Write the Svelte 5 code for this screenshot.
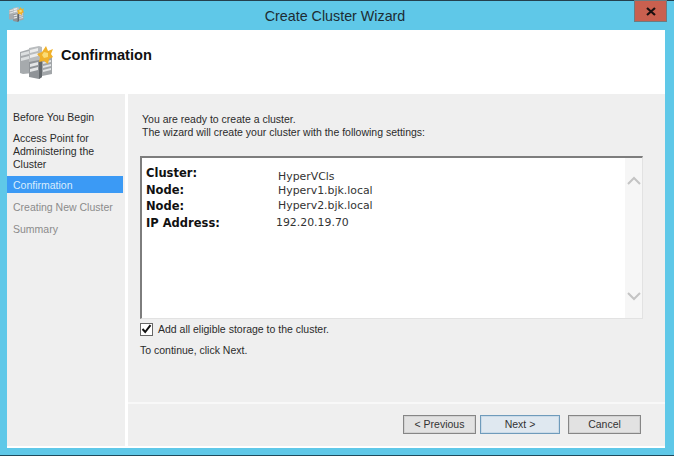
<script>
  const steps = [
    { label: 'Before You Begin', state: '' },
    { label: 'Access Point for Administering the Cluster', state: 'multi' },
    { label: 'Confirmation', state: 'active' },
    { label: 'Creating New Cluster', state: 'off' },
    { label: 'Summary', state: 'off' }
  ];

  const settings = [
    { name: 'Cluster:', value: 'HyperVCls' },
    { name: 'Node:', value: 'Hyperv1.bjk.local' },
    { name: 'Node:', value: 'Hyperv2.bjk.local' },
    { name: 'IP Address:', value: '192.20.19.70' }
  ];

  let addStorage = true;
</script>

{#snippet clusterIcon(size)}
  <svg width={size} height={size} viewBox="0 0 33 33" aria-hidden="true">
    <!-- back left -->
    <path d="M0 6 L10 3 L13 4 V27 L3 28 L0 27 Z" fill="#a6aaad" />
    <path d="M1 7 L9 5 V8 L1 10 Z M1 12 L9 10 V13 L1 15 Z" fill="#dcdfe0" />
    <path d="M9 4 L13 4 V27 H9 Z" fill="#8a8e91" />
    <!-- back middle -->
    <path d="M9 2 L19 0 L22 1 V20 H9 Z" fill="#b9bcbe" />
    <path d="M10 4 L18 2 V5 L10 7 Z M10 9 L18 7 V10 L10 12 Z" fill="#eceded" />
    <!-- right -->
    <path d="M20 12 L32 10 V28 L22 30 L20 29 Z" fill="#a2a6a9" />
    <path d="M23 16 L31 14 V16 L23 18 Z M23 20 L31 18 V20 L23 22 Z M23 24 L31 22 V24 L23 26 Z" fill="#e2e4e5" />
    <!-- front -->
    <path d="M9 16 L19 14 L22 15 V31 L19 33 L9 31 Z" fill="#8f9397" />
    <path d="M10 18 L18 16 V19 L10 21 Z M10 23 L18 21 V24 L10 26 Z" fill="#e4e6e7" />
    <path d="M19 15 L22 15 V31 L19 33 Z" fill="#63686c" />
    <!-- star -->
    <path d="M26 0 L28 5 L33 3 L31 8 L33 11 L29 13 L28 18 L24 15 L19 16 L20 11 L17 8 L22 6 Z" fill="#f0b12a" />
    <path d="M24 6 L28 7 L28 11 L24 12 L22 9 Z" fill="#fbdc74" />
  </svg>
{/snippet}

<div class="window">
  <header class="titlebar">
    <span class="app-icon">{@render clusterIcon(15)}</span>
    <h1>Create Cluster Wizard</h1>
    <button class="close" aria-label="Close">
      <svg width="10" height="9" viewBox="0 0 10 9"><path d="M1 1 L9 8 M9 1 L1 8" stroke="#1a1010" stroke-width="2.2" /></svg>
    </button>
  </header>

  <div class="body">
    <div class="banner">
      {@render clusterIcon(33)}
      <h2>Confirmation</h2>
    </div>

    <div class="columns">
      <nav class="steps">
        {#each steps as step}
          <div class="step {step.state}">{step.label}</div>
        {/each}
      </nav>

      <main class="page">
        <div class="content">
          <p class="intro">You are ready to create a cluster.<br />The wizard will create your cluster with the following settings:</p>

          <div class="summary">
            <div class="rows">
              {#each settings as row, i}
                <div class="row r{i}">
                  <span class="name">{row.name}</span>
                  <span class="value">{row.value}</span>
                </div>
              {/each}
            </div>
            <div class="scroll">
              <svg width="14" height="9" viewBox="0 0 14 9"><path d="M1 8 L7 2 L13 8" fill="none" stroke="#c4c4c4" stroke-width="2" /></svg>
              <svg width="14" height="9" viewBox="0 0 14 9"><path d="M1 1 L7 7 L13 1" fill="none" stroke="#c4c4c4" stroke-width="2" /></svg>
            </div>
          </div>

          <label class="check">
            <input type="checkbox" bind:checked={addStorage} />
            <span class="box">
              {#if addStorage}
                <svg width="11" height="10" viewBox="0 0 11 10"><path d="M1.5 5 L4.2 8 L9.5 1.2" fill="none" stroke="#111" stroke-width="2" /></svg>
              {/if}
            </span>
            Add all eligible storage to the cluster.
          </label>
          <p class="hint">To continue, click Next.</p>
        </div>

        <footer class="actions">
          <button class="btn">&lt; Previous</button>
          <button class="btn primary">Next &gt;</button>
          <button class="btn cancel">Cancel</button>
        </footer>
      </main>
    </div>
  </div>
</div>

<style>
  :global(body) {
    margin: 0;
    background: #5fc8e8;
  }

  .window {
    width: 674px;
    height: 456px;
    box-sizing: border-box;
    display: flex;
    flex-direction: column;
    padding: 0 9px 7px 7px;
    background: #5fc8e8;
    border-top: 1px solid #24404e;
    border-bottom: 1px solid #1f4a5c;
    font-family: "Liberation Sans", Arial, sans-serif;
    color: #2b2b2b;
  }

  .titlebar {
    height: 29px;
    flex: none;
    display: flex;
    align-items: flex-start;
    position: relative;
  }

  .app-icon {
    margin: 6px 0 0 2px;
    height: 15px;
  }

  h1 {
    flex: 1;
    margin: 6px 0 0;
    padding-right: 19px;
    font-size: 14.3px;
    line-height: 18px;
    font-weight: 400;
    text-align: center;
    color: #1d2c33;
  }

  .close {
    position: absolute;
    top: -1px;
    right: -2px;
    width: 33px;
    height: 22px;
    padding: 0;
    border: 1px solid #6d7b80;
    background: #c9604f;
    display: flex;
    align-items: center;
    justify-content: center;
  }

  .body {
    flex: 1;
    min-height: 0;
    display: flex;
    flex-direction: column;
    background: #fff;
  }

  .banner {
    height: 64px;
    flex: none;
    box-sizing: border-box;
    padding: 16px 0 0 13px;
    display: flex;
    align-items: flex-start;
    gap: 8px;
  }

  h2 {
    margin: 0;
    font-size: 14.6px;
    line-height: 18px;
    font-weight: 700;
    color: #111;
  }

  .columns {
    flex: 1;
    min-height: 0;
    display: flex;
    gap: 3px;
    padding-bottom: 2px;
  }

  .steps {
    width: 118px;
    flex: none;
    box-sizing: border-box;
    background: #efefef;
    padding-top: 16px;
    font-size: 10.5px;
  }

  .step {
    padding: 0 2px 0 6px;
    margin-right: 2px;
    height: 22px;
    line-height: 14px;
  }

  .step.multi {
    height: 44px;
    line-height: 13px;
    padding-right: 8px;
  }

  .step.active {
    height: 17px;
    line-height: 18px;
    margin-bottom: 7px;
    background: #3b9af5;
    color: #d9edfd;
  }

  .step.off {
    color: #8b8b8b;
  }

  .page {
    flex: 1;
    min-width: 0;
    display: flex;
    flex-direction: column;
    background: #efefef;
  }

  .content {
    flex: 1;
    min-height: 0;
    padding: 19px 22px 0 12px;
    font-size: 10.5px;
  }

  .intro {
    margin: 0 0 0 2px;
    line-height: 13px;
  }

  .summary {
    margin-top: 17px;
    height: 163px;
    box-sizing: border-box;
    display: flex;
    background: #fff;
    border-top: 2px solid #7d7d7d;
    border-left: 2px solid #7d7d7d;
    border-right: 1px solid #e2e2e2;
    border-bottom: 1px solid #e2e2e2;
  }

  .rows {
    flex: 1;
    padding: 7px 0 0 4px;
  }

  .row {
    display: flex;
    height: 16.5px;
    align-items: flex-start;
  }

  .name {
    width: 132px;
    font-family: "DejaVu Sans", Verdana, sans-serif;
    font-weight: 700;
    font-size: 11.5px;
    line-height: 16px;
    color: #111;
  }

  .value {
    font-family: "DejaVu Sans", Verdana, sans-serif;
    font-size: 10.9px;
    line-height: 16px;
    color: #333;
  }

  .r0 .value {
    margin-top: 4px;
  }

  .r1 .value {
    margin-top: 1px;
  }

  .r3 .value {
    margin-left: -2px;
  }

  .scroll {
    width: 17px;
    flex: none;
    background: #f6f6f6;
    display: flex;
    flex-direction: column;
    justify-content: space-between;
    align-items: center;
    padding: 18px 0 17px;
    box-sizing: border-box;
  }

  .check {
    display: flex;
    align-items: center;
    gap: 5px;
    margin-top: 3px;
    height: 14px;
    line-height: 14px;
  }

  .check input {
    display: none;
  }

  .box {
    width: 11px;
    height: 11px;
    flex: none;
    border: 1px solid #666;
    background: #fff;
    display: flex;
    align-items: center;
    justify-content: center;
  }

  .hint {
    margin: 7px 0 0;
    line-height: 14px;
  }

  .actions {
    height: 44px;
    flex: none;
    box-sizing: border-box;
    border-top: 2px solid #f8f8f8;
    padding: 11px 24px 0 0;
    display: flex;
    justify-content: flex-end;
    align-items: flex-start;
    gap: 8px;
  }

  .btn {
    width: 73px;
    height: 19px;
    padding: 0;
    font: 10.5px/17px "Liberation Sans", Arial, sans-serif;
    color: #333;
    background: #e2e2e2;
    border: 1px solid #868686;
    box-shadow: inset 0 0 0 1px #d2d2d2;
  }

  .btn.primary {
    width: 80px;
    margin-left: -4px;
    background: #dfe8f0;
    border-color: #6f9bbb;
    box-shadow: inset 0 0 0 1px #cbdbe8;
  }
</style>
